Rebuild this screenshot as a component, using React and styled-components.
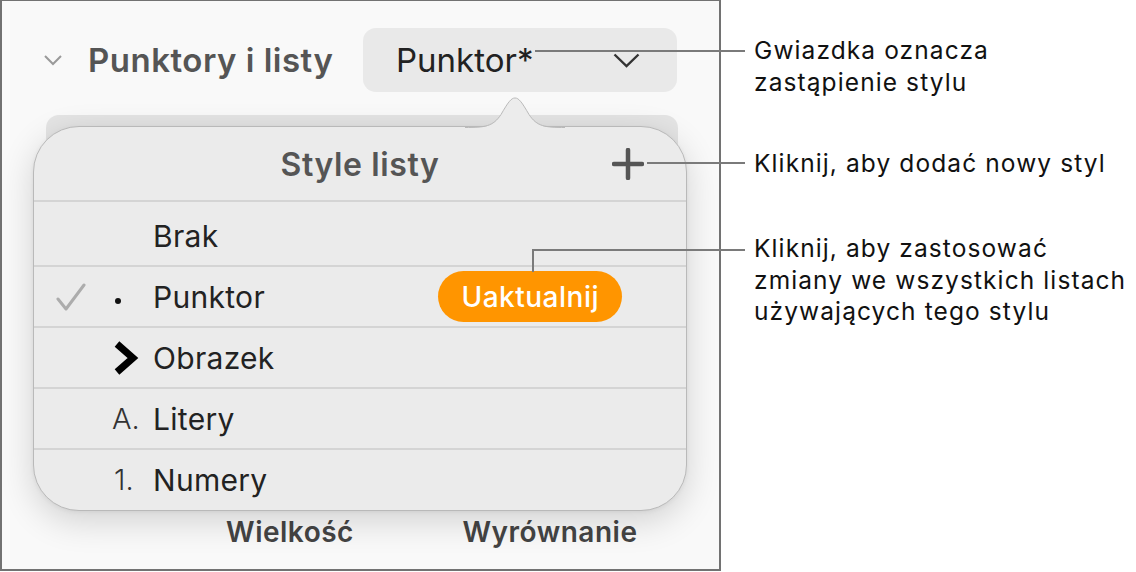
import React from 'react';
import styled, { createGlobalStyle } from 'styled-components';

const Global = createGlobalStyle`
  html, body {
    margin: 0;
    padding: 0;
    background: #fff;
  }
  body {
    font-family: Inter, "Noto Sans", sans-serif;
  }
`

const Page = styled.div`
  position: relative;
  display: flex;
  flex-direction: row;
  width: 1136px;
  height: 572px;
  overflow: hidden;
`

const Panel = styled.div`
  position: relative;
  box-sizing: border-box;
  width: 721px;
  height: 571px;
  background: #f9f9f9;
  border: 2px solid #727272;
  border-top-width: 1px;
  display: flex;
  flex-direction: column;
`

const HeaderRow = styled.div`
  display: flex;
  flex-direction: row;
  align-items: center;
  margin-top: 27px;
  padding-left: 41px;
  padding-right: 42px;
  height: 64px;
`

const SectionTitle = styled.div`
  flex: 1;
  margin-left: 25px;
  font-size: 33px;
  font-weight: 600;
  color: #555;
  letter-spacing: 0.5px;
  white-space: nowrap;
`

const Select = styled.div`
  box-sizing: border-box;
  width: 314px;
  height: 64px;
  border-radius: 13px;
  background: #e9e9e9;
  display: flex;
  align-items: center;
  justify-content: space-between;
  padding: 0 37px 0 33px;
  font-size: 33px;
  color: #222;
`

const HiddenBar = styled.div`
  margin-top: 23px;
  margin-left: 44px;
  width: 632px;
  height: 380px;
  border-radius: 13px;
  background: #e4e4e4;
`

const Labels = styled.div`
  display: grid;
  grid-template-columns: 260px 260px;
  padding-left: 158px;
  margin-top: 20px;
`

const Label = styled.div`
  text-align: center;
  font-size: 28px;
  font-weight: 600;
  color: #444;
  letter-spacing: 0.5px;
`

const Popover = styled.div`
  position: absolute;
  left: 31px;
  top: 125px;
  box-sizing: border-box;
  width: 654px;
  height: 385px;
  background: #ebebeb;
  border: 1px solid #b9b9b9;
  border-radius: 46px;
  box-shadow: 0 10px 34px rgba(0, 0, 0, 0.16), 0 1px 4px rgba(0, 0, 0, 0.06);
  display: flex;
  flex-direction: column;
`

const Bump = styled.svg`
  position: absolute;
  left: 431px;
  top: -30px;
  overflow: visible;
`

const PopHeader = styled.div`
  display: grid;
  grid-template-columns: 1fr auto 1fr;
  align-items: center;
  height: 73px;
  padding-right: 42px;
  padding-left: 42px;
`

const PopTitle = styled.div`
  grid-column: 2;
  font-size: 32px;
  font-weight: 600;
  color: #555;
  letter-spacing: 0.6px;
  padding-top: 2px;
`

const PlusBox = styled.div`
  grid-column: 3;
  justify-self: end;
  display: flex;
`

const Row = styled.div`
  box-sizing: border-box;
  display: flex;
  align-items: center;
  height: ${p => p.h || 61}px;
  border-top: 2px solid #d4d4d4;
  padding-left: 22px;
  padding-top: ${p => p.pt || 0}px;
`

const CheckCell = styled.div`
  width: 56px;
  display: flex;
  align-items: center;
`

const Marker = styled.div`
  width: 41px;
  display: flex;
  align-items: center;
  font-size: 29px;
  font-weight: 300;
  color: #333;
  padding-left: ${p => p.pad || 0}px;
  box-sizing: border-box;
`

const Dot = styled.span`
  width: 6px;
  height: 6px;
  border-radius: 50%;
  background: #111;
  margin-left: 3px;
  margin-top: 8px;
`

const ItemText = styled.div`
  font-size: 30px;
  color: #222;
  letter-spacing: 0.3px;
`

const Pill = styled.div`
  margin-left: auto;
  margin-right: 64px;
  height: 51px;
  padding: 0 23px;
  border-radius: 26px;
  background: #ff9500;
  color: #fff;
  font-size: 28px;
  font-weight: 500;
  letter-spacing: 0.5px;
  display: flex;
  align-items: center;
`

const Notes = styled.div`
  display: flex;
  flex-direction: column;
  padding-left: 33px;
  padding-top: 34px;
`

const Note = styled.div`
  font-size: 24.5px;
  line-height: ${p => p.lh || 32}px;
  letter-spacing: 1.1px;
  color: #111;
  margin-top: ${p => p.mt || 0}px;
  white-space: nowrap;
`

const Leader = styled.div`
  position: absolute;
  background: #7a7a7a;
  left: ${p => p.x}px;
  top: ${p => p.y}px;
  width: ${p => p.w}px;
  height: ${p => p.h}px;
`

const items = [
  { name: 'Brak', h: 65, pt: 5 },
  { name: 'Punktor', marker: 'dot', checked: true, update: true },
  { name: 'Obrazek', marker: 'arrow' },
  { name: 'Litery', marker: 'A.' },
  { name: 'Numery', marker: '1.', pad: 2 },
]

function ItemMarker({ kind, pad }) {
  if (kind === 'dot') return <Marker><Dot /></Marker>
  if (kind === 'arrow') {
    return (
      <Marker>
        <svg width="28" height="36" viewBox="0 0 28 36">
          <path d="M5 4 L21 18 L5 32" fill="none" stroke="#000" strokeWidth="7" strokeLinejoin="miter" />
        </svg>
      </Marker>
    )
  }
  return <Marker pad={pad}>{kind}</Marker>
}

export default function App() {
  return (
    <Page>
      <Global />
      <Panel>
        <HeaderRow>
          <svg width="20" height="12" viewBox="0 0 20 12">
            <path d="M2 2 L10 10 L18 2" fill="none" stroke="#9a9a9a" strokeWidth="2" />
          </svg>
          <SectionTitle>Punktory i listy</SectionTitle>
          <Select>
            <span>Punktor*</span>
            <svg width="27" height="15" viewBox="0 0 27 15">
              <path d="M1.5 1.5 L13.5 13 L25.5 1.5" fill="none" stroke="#333" strokeWidth="2.4" />
            </svg>
          </Select>
        </HeaderRow>

        <HiddenBar />

        <Labels>
          <Label>Wielkość</Label>
          <Label>Wyrównanie</Label>
        </Labels>

        <Popover>
          <Bump width="100" height="32" viewBox="0 0 100 32">
            <path d="M0 31 C20 31 28 30 36 18 C43 6 46 1.5 50 1.5 C54 1.5 57 6 64 18 C72 30 80 31 100 31 L100 33 L0 33 Z" fill="#ececec" />
            <path d="M0 30.5 C20 30.5 28 29.5 36 17.5 C43 5.5 46 1 50 1 C54 1 57 5.5 64 17.5 C72 29.5 80 30.5 100 30.5" fill="none" stroke="#b9b9b9" strokeWidth="1" />
          </Bump>
          <PopHeader>
            <PopTitle>Style listy</PopTitle>
            <PlusBox>
              <svg width="32" height="32" viewBox="0 0 32 32">
                <path d="M16 2 V30 M2 16 H30" stroke="#555" strokeWidth="4.5" strokeLinecap="round" />
              </svg>
            </PlusBox>
          </PopHeader>
          {items.map(it => (
            <Row key={it.name} h={it.h} pt={it.pt}>
              <CheckCell>
                {it.checked && (
                  <svg width="30" height="28" viewBox="0 0 30 28">
                    <path d="M2 16 L10 26 L28 2" fill="none" stroke="#acacac" strokeWidth="3" strokeLinecap="round" strokeLinejoin="round" />
                  </svg>
                )}
              </CheckCell>
              <ItemMarker kind={it.marker} pad={it.pad} />
              <ItemText>{it.name}</ItemText>
              {it.update && <Pill>Uaktualnij</Pill>}
            </Row>
          ))}
        </Popover>
      </Panel>

      <Notes>
        <Note>Gwiazdka oznacza<br />zastąpienie stylu</Note>
        <Note mt={49}>Kliknij, aby dodać nowy styl</Note>
        <Note mt={54} lh={31.5}>Kliknij, aby zastosować<br />zmiany we wszystkich listach<br />używających tego stylu</Note>
      </Notes>

      <Leader x={535} y={50} w={210} h={2} />
      <Leader x={647} y={162} w={98} h={2} />
      <Leader x={532} y={249} w={213} h={2} />
      <Leader x={532} y={249} w={2} h={23} />
    </Page>
  )
}
